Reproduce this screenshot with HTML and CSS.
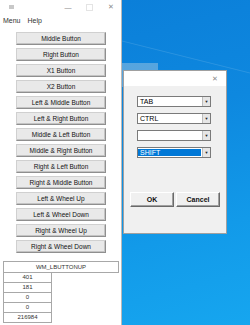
FILE: index.html
```html
<!DOCTYPE html>
<html lang="en">
<head>
  <meta charset="UTF-8">
  <title>Mouse Buttons</title>
  <link rel="stylesheet" href="styles.css">
</head>
<body>

  <!-- Main window -->
  <div class="window">
    <div class="titlebar">
      <span class="appicon"></span>
      <span class="ctl">&#8212;</span>
      <span class="ctl max"></span>
      <span class="ctl">&#10005;</span>
    </div>
    <div class="menubar">
      <span>Menu</span>
      <span>Help</span>
    </div>

    <div class="buttons">
      <button>Middle Button</button>
      <button>Right Button</button>
      <button>X1 Button</button>
      <button>X2 Button</button>
      <button>Left &amp; Middle Button</button>
      <button>Left &amp; Right Button</button>
      <button>Middle &amp; Left Button</button>
      <button>Middle &amp; Right Button</button>
      <button>Right &amp; Left Button</button>
      <button>Right &amp; Middle Button</button>
      <button>Left &amp; Wheel Up</button>
      <button>Left &amp; Wheel Down</button>
      <button>Right &amp; Wheel Up</button>
      <button>Right &amp; Wheel Down</button>
    </div>

    <div class="info">
      <div class="msg">WM_LBUTTONUP</div>
      <div class="val">401</div>
      <div class="val">181</div>
      <div class="val">0</div>
      <div class="val">0</div>
      <div class="val">216984</div>
    </div>
  </div>

  <!-- Desktop with dialog -->
  <div class="desktop">
    <div class="streak"></div>
    <div class="ghost"></div>
    <div class="dialog">
      <div class="dlg-title"><span class="ctl">&#10005;</span></div>
      <div class="dlg-body">
        <div class="combo"><span class="txt">TAB</span><span class="arrow">&#9660;</span></div>
        <div class="combo"><span class="txt">CTRL</span><span class="arrow">&#9660;</span></div>
        <div class="combo"><span class="txt"></span><span class="arrow">&#9660;</span></div>
        <div class="combo active"><span class="txt">SHIFT</span><span class="arrow">&#9660;</span></div>
      </div>
      <div class="dlg-buttons">
        <button>OK</button>
        <button>Cancel</button>
      </div>
    </div>
  </div>

</body>
</html>
```

FILE: styles.css
```css
body {
  margin: 0;
  width: 250px;
  height: 325px;
  display: flex;
  overflow: hidden;
  font-family: "Liberation Sans", Arial, sans-serif;
  font-size: 7px;
  color: #000;
}

.window {
  width: 122px;
  height: 325px;
  background: #fff;
  border-right: 1px solid #b9b9b9;
  box-sizing: border-box;
  flex-shrink: 0;
}

.titlebar {
  height: 14px;
  display: flex;
  align-items: center;
  padding-left: 9px;
  color: #999;
}

.appicon {
  width: 5px;
  height: 4px;
  background: #c8c8c8;
  margin-right: auto;
}

.ctl {
  width: 20px;
  text-align: center;
  font-size: 7px;
  color: #8a8a8a;
}

.max {
  height: 5px;
  width: 5px;
  border: 1px solid #e4e4e4;
  margin: 0 8px;
}

.menubar {
  height: 12px;
  display: flex;
  gap: 7px;
  align-items: center;
  padding-left: 3px;
  color: #333;
}

.buttons {
  display: flex;
  flex-direction: column;
  gap: 3px;
  margin: 6px 0 0 16px;
  width: 90px;
}

button {
  font-family: "Liberation Sans", Arial, sans-serif;
  font-size: 6.5px;
  height: 13px;
  padding: 0;
  background: #e9e9e9;
  border: 1px solid #d0d0d0;
  border-right-color: #8f8f8f;
  border-bottom-color: #8f8f8f;
  box-shadow: inset -1px -1px 0 #c4c4c4;
  color: #111;
}

.info {
  margin: 8px 0 0 3px;
  width: 116px;
}

.msg {
  height: 10px;
  border: 1px solid #a8a8a8;
  text-align: center;
  line-height: 10px;
  font-size: 6px;
  color: #333;
}

.val {
  width: 47px;
  height: 9px;
  line-height: 9px;
  border: 1px solid #a8a8a8;
  border-top: none;
  text-align: center;
  font-size: 6px;
  color: #333;
}

.desktop {
  flex: 1;
  position: relative;
  overflow: hidden;
  background: linear-gradient(165deg, #0b7fd9 0%, #0e88df 35%, #129ae9 70%, #16a6ef 100%);
}

.streak {
  position: absolute;
  left: -10px;
  top: 38px;
  width: 160px;
  height: 1px;
  background: rgba(255, 255, 255, 0.12);
  transform: rotate(14deg);
  transform-origin: left top;
}

.ghost {
  position: absolute;
  left: -5px;
  top: 63px;
  width: 41px;
  height: 24px;
  background: rgba(225, 225, 225, 0.35);
}

.dialog {
  position: absolute;
  left: 1px;
  top: 70px;
  width: 104px;
  height: 164px;
  background: #f0f0f0;
  border: 1px solid #a0a0a0;
  box-sizing: border-box;
  display: flex;
  flex-direction: column;
}

.dlg-title {
  height: 15px;
  background: #fff;
  display: flex;
  justify-content: flex-end;
  align-items: center;
  padding-right: 1px;
}

.dlg-body {
  display: flex;
  flex-direction: column;
  gap: 6px;
  padding: 10px 0 0 13px;
}

.combo {
  width: 74px;
  height: 11px;
  box-sizing: border-box;
  border: 1px solid #7a7a7a;
  background: #fff;
  display: flex;
  align-items: stretch;
}

.combo .txt {
  flex: 1;
  font-size: 7px;
  line-height: 9px;
  padding-left: 2px;
}

.combo.active .txt {
  background: #0078d7;
  color: #fff;
  margin: 1px 1px 1px 0;
  line-height: 7px;
}

.arrow {
  width: 7px;
  background: #e6e6e6;
  border-left: 1px solid #bdbdbd;
  font-size: 4px;
  line-height: 9px;
  text-align: center;
  color: #222;
}

.dlg-buttons {
  display: flex;
  gap: 2px;
  margin: 34px 0 0 6px;
}

.dlg-buttons button {
  width: 44px;
  height: 15px;
  font-weight: bold;
  font-size: 7px;
  background: #f0f0f0;
  border-color: #fff #6a6a6a #6a6a6a #fff;
  box-shadow: inset -1px -1px 0 #a0a0a0;
}
```
